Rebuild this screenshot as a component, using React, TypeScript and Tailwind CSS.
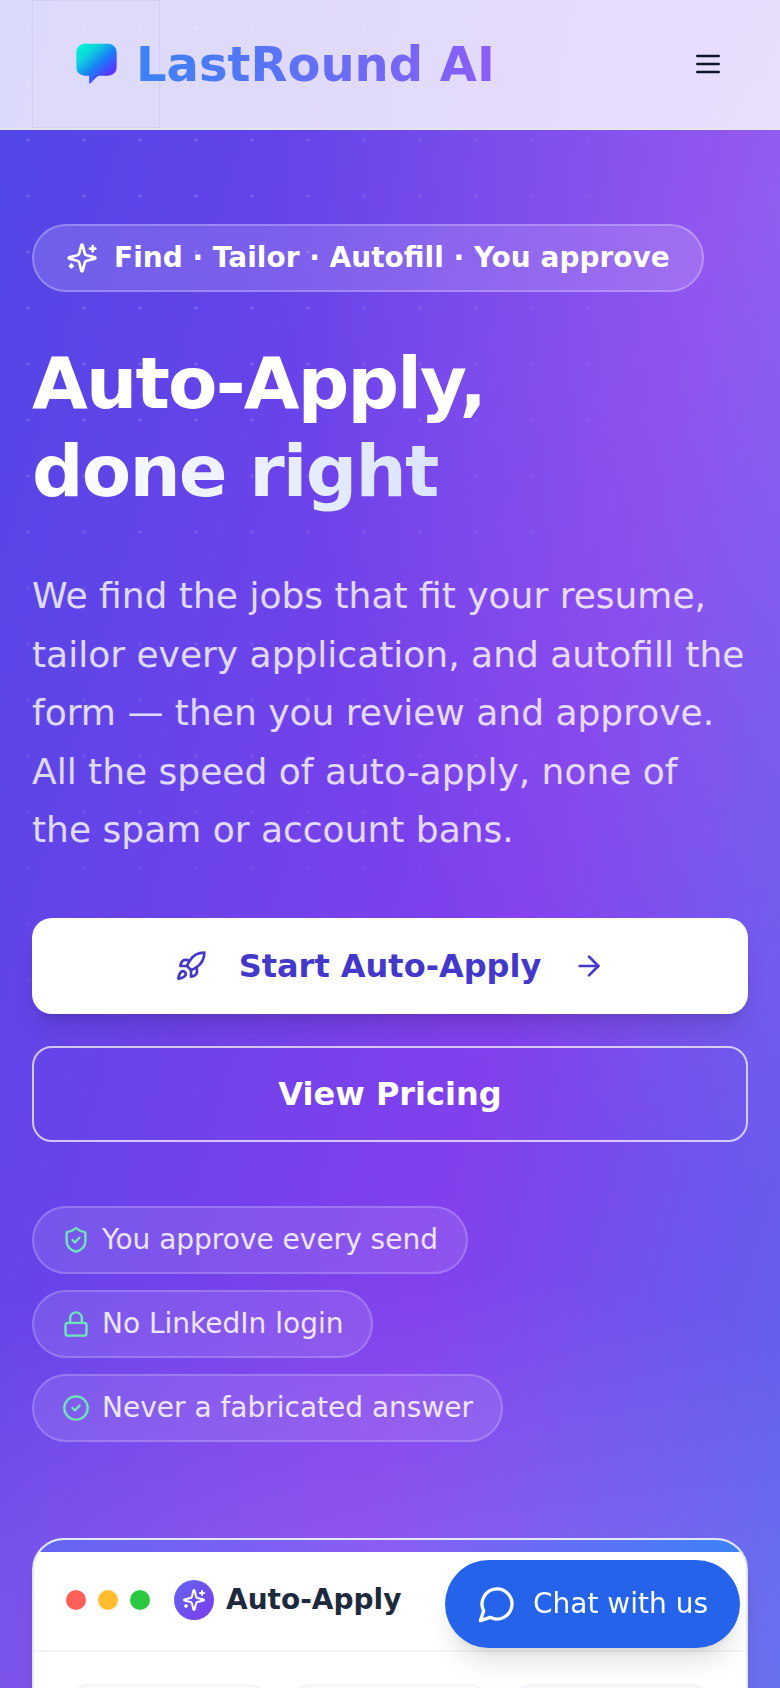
import React from 'react';
import { ArrowRight, CircleCheck, Lock, ShieldCheck } from 'lucide-react';

interface IconProps {
  className?: string;
}

function SparklesIcon({ className }: IconProps) {
  return (
    <svg className={className} fill="none" stroke="currentColor" strokeWidth={2} strokeLinecap="round" strokeLinejoin="round" viewBox="0 0 24 24" aria-hidden="true">
      <path d="M9.937 15.5A2 2 0 0 0 8.5 14.063l-6.135-1.582a.5.5 0 0 1 0-.962L8.5 9.936A2 2 0 0 0 9.937 8.5l1.582-6.135a.5.5 0 0 1 .963 0L14.063 8.5A2 2 0 0 0 15.5 9.937l6.135 1.581a.5.5 0 0 1 0 .964L15.5 14.063a2 2 0 0 0-1.437 1.437l-1.582 6.135a.5.5 0 0 1-.963 0z" />
      <path d="M20 3v4" />
      <path d="M22 5h-4" />
      <path d="M4 17v2" />
      <path d="M5 18H3" />
    </svg>
  );
}

function RocketIcon({ className }: IconProps) {
  return (
    <svg className={className} fill="none" stroke="currentColor" strokeWidth={2} strokeLinecap="round" strokeLinejoin="round" viewBox="0 0 24 24" aria-hidden="true">
      <path d="M4.5 16.5c-1.5 1.26-2 5-2 5s3.74-.5 5-2c.71-.84.7-2.13-.09-2.91a2.18 2.18 0 0 0-2.91-.09z" />
      <path d="m12 15-3-3a22 22 0 0 1 2-3.95A12.88 12.88 0 0 1 22 2c0 2.72-.78 7.5-6 11a22.35 22.35 0 0 1-4 2z" />
      <path d="M9 12H4s.55-3.03 2-4c1.62-1.08 5 0 5 0" />
      <path d="M12 15v5s3.03-.55 4-2c1.08-1.62 0-5 0-5" />
    </svg>
  );
}

function Logo() {
  return (
    <svg className="w-32 h-32 shrink-0 border border-indigo-950/5" viewBox="0 0 128 128" aria-hidden="true">
      <defs>
        <linearGradient id="logo" x1="48" y1="44" x2="80" y2="80" gradientUnits="userSpaceOnUse">
          <stop offset="0" stopColor="#00f5d4" />
          <stop offset="0.25" stopColor="#0fd5dd" />
          <stop offset="0.55" stopColor="#1684f5" />
          <stop offset="0.8" stopColor="#4a45ff" />
          <stop offset="1" stopColor="#7028ff" />
        </linearGradient>
      </defs>
      <path
        d="M52 43.500H76.500A8.500 8.500 0 0 1 85 52V67.500A8.500 8.500 0 0 1 76.500 76H68C66 76 65 77 64 78L58.500 83.600C57.800 84.400 57 84 57 83V76H52.500A8.500 8.500 0 0 1 44 67.500V52A8.500 8.500 0 0 1 52.500 43.500Z"
        fill="url(#logo)"
      />
    </svg>
  );
}

const assurances = [
  { label: 'You approve every send', icon: ShieldCheck },
  { label: 'No LinkedIn login', icon: Lock },
  { label: 'Never a fabricated answer', icon: CircleCheck },
];

function Header() {
  return (
    <header className="relative z-10 flex items-center justify-between px-8 bg-white/80 border-b-2 border-slate-200/80">
      <a href="#" className="flex items-center">
        <Logo />
        <span className="-ml-6 text-5xl font-bold bg-[linear-gradient(to_right,#3b82f6,#8b5cf6)] bg-clip-text text-transparent">
          LastRound AI
        </span>
      </a>
      <button type="button" aria-label="Open menu" className="p-6 text-slate-900">
        <svg className="w-8 h-8" fill="none" stroke="currentColor" strokeWidth={2} strokeLinecap="round" viewBox="0 0 24 24" aria-hidden="true">
          <path d="M4 6h16M4 12h16M4 18h16" />
        </svg>
      </button>
    </header>
  );
}

function PreviewCard() {
  return (
    <div className="mt-24 rounded-[32px] border-2 border-slate-200 bg-white overflow-hidden shadow-xl">
      <div className="h-3 bg-[linear-gradient(to_right,#6366f1,#8b5cf6,#3b82f6)]"></div>
      <div className="flex items-center px-8 pt-7 pb-[30px] border-b-2 border-slate-100">
        <div className="flex gap-3">
          <span className="w-5 h-5 rounded-full bg-[#ff5f57]"></span>
          <span className="w-5 h-5 rounded-full bg-[#febc2e]"></span>
          <span className="w-5 h-5 rounded-full bg-[#28c840]"></span>
        </div>
        <div className="flex items-center gap-3 ml-6">
          <span className="w-10 h-10 rounded-full bg-[linear-gradient(to_bottom_right,#6366f1,#7c3aed)] flex items-center justify-center text-white">
            <SparklesIcon className="w-6 h-6" />
          </span>
          <span className="text-[28px] leading-10 font-bold text-slate-800">Auto-Apply</span>
        </div>
      </div>
      <div className="grid grid-cols-3 gap-4 p-8">
        <div className="h-32 rounded-3xl border-2 border-slate-100 bg-slate-50"></div>
        <div className="h-32 rounded-3xl border-2 border-slate-100 bg-slate-50"></div>
        <div className="h-32 rounded-3xl border-2 border-slate-100 bg-slate-50"></div>
      </div>
    </div>
  );
}

export default function App() {
  return (
    <div className="relative h-screen overflow-hidden font-['DejaVu_Sans',sans-serif]">
      {/* Background: gradient, glows and dot grid */}
      <div className="absolute inset-x-0 top-0 h-[2830px] bg-[linear-gradient(to_bottom_right,#4f46e5,#8240ed,#4480ee)]">
        <div className="absolute inset-0 bg-[radial-gradient(ellipse_500px_1000px_at_780px_200px,rgba(255,255,255,0.14),transparent),radial-gradient(ellipse_800px_440px_at_340px_1700px,rgba(255,255,255,0.16),transparent)]"></div>
        <div className="absolute inset-0 bg-[radial-gradient(circle,rgba(255,255,255,0.14)_2px,transparent_2px)] bg-[size:56px_56px] [mask-image:radial-gradient(ellipse_560px_960px_at_160px_240px,black,transparent)]"></div>
      </div>

      <Header />

      <main className="relative px-8 pt-[94px]">
        <div className="flex w-fit items-center gap-4 px-8 py-3 rounded-full border-2 border-white/25 bg-white/15 text-white">
          <SparklesIcon className="w-8 h-8" />
          <span className="text-[28px] leading-10 font-semibold">Find · Tailor · Autofill · You approve</span>
        </div>

        <h1 className="mt-[47px] text-7xl leading-[88px] font-extrabold tracking-tight text-white">
          Auto-Apply,
          <br />
          <span className="inline-block bg-[linear-gradient(to_right,#ffffff,#dbe4ff)] bg-clip-text text-transparent">
            done right
          </span>
        </h1>

        <p className="mt-[52px] text-4xl leading-relaxed text-white/80">
          We find the jobs that fit your resume, tailor every application, and autofill the form — then you review and
          approve. All the speed of auto-apply, none of the spam or account bans.
        </p>

        {/* Actions */}
        <div className="mt-[58px] flex flex-col gap-8">
          <button type="button" className="h-24 rounded-[20px] bg-white text-[#4338ca] shadow-xl flex items-center justify-center gap-8">
            <RocketIcon className="w-8 h-8" />
            <span className="text-[32px] font-semibold">Start Auto-Apply</span>
            <ArrowRight className="w-8 h-8" />
          </button>
          <button type="button" className="h-24 rounded-[20px] border-2 border-white/70 text-white text-[32px] font-semibold">
            View Pricing
          </button>
        </div>

        <ul className="mt-16 flex flex-col items-start gap-4">
          {assurances.map(({ label, icon: Icon }) => (
            <li key={label} className="flex items-center gap-3 px-7 py-3 rounded-full border-2 border-white/20 bg-white/10">
              <Icon className="w-7 h-7 text-[#6ee7b7]" />
              <span className="text-[28px] leading-10 text-white/85">{label}</span>
            </li>
          ))}
        </ul>

        <PreviewCard />
      </main>

      {/* Floating chat button */}
      <button type="button" className="fixed right-10 bottom-10 z-20 h-[88px] px-8 flex items-center gap-4 rounded-full bg-[#2563eb] text-white shadow-xl">
        <svg className="w-10 h-10" fill="none" stroke="currentColor" strokeWidth={2} strokeLinecap="round" strokeLinejoin="round" viewBox="0 0 24 24" aria-hidden="true">
          <path d="M7.9 20A9 9 0 1 0 4 16.1L2 22Z" />
        </svg>
        <span className="text-[28px] leading-10">Chat with us</span>
      </button>
    </div>
  );
}
